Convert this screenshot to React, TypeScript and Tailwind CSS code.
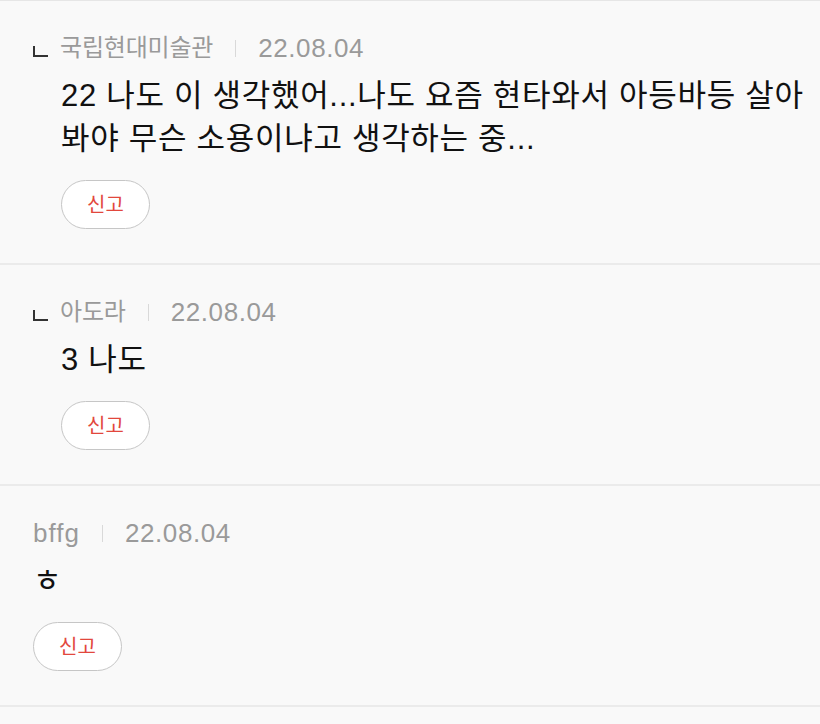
const comments = [
  {
    id: 1,
    reply: true,
    name: "국립현대미술관",
    date: "22.08.04",
    lines: ["22 나도 이 생각했어...나도 요즘 현타와서 아등바등 살아", "봐야 무슨 소용이냐고 생각하는 중..."],
  },
  { id: 2, reply: true, name: "아도라", date: "22.08.04", lines: ["3 나도"] },
  { id: 3, reply: false, name: "bffg", date: "22.08.04", lines: ["ㅎ"] },
]

function Comment({ reply, name, date, lines }: { reply: boolean; name: string; date: string; lines: string[] }) {
  const korean = /[가-힣]/.test(name)
  return (
    <div className="border-b-2 border-[#ebebeb] pl-[33px] pr-2 pt-[33px] pb-[34px]">
      <div className="flex items-center h-7 text-[#9a9a9a]">
        {reply && <span className="w-[15px] h-[11px] mt-[6px] mr-[12px] border-l-2 border-b-2 border-[#333]" />}
        <span className={korean ? "text-[24px] tracking-[-0.2px]" : "text-[26px] tracking-[1px]"}>{name}</span>
        <span className="w-px h-[17px] bg-[#d9d9d9] mx-[22px]" />
        <span className="text-[26px] tracking-[0.6px]">{date}</span>
      </div>
      <div className={reply ? "pl-[28px]" : ""}>
        <p className="mt-[12px] text-[31px] leading-[43px] tracking-[0.7px] whitespace-nowrap text-[#111]">
          {lines.map((l, i) => (
            <span key={i}>
              {i > 0 && <br />}
              {l}
            </span>
          ))}
        </p>
        <button className="mt-[20px] w-[89px] h-[49px] rounded-full border-[1.5px] border-[#c6c6c6] bg-white text-[20px] text-[#e2473d]">
          신고
        </button>
      </div>
    </div>
  )
}

export default function App() {
  return (
    <div
      className="min-h-screen bg-[#f9f9f9] border-t border-[#e6e6e6]"
      style={{ fontFamily: '"Liberation Sans", "Noto Sans CJK KR", sans-serif' }}
    >
      {comments.map((c) => (
        <Comment key={c.id} {...c} />
      ))}
    </div>
  )
}
